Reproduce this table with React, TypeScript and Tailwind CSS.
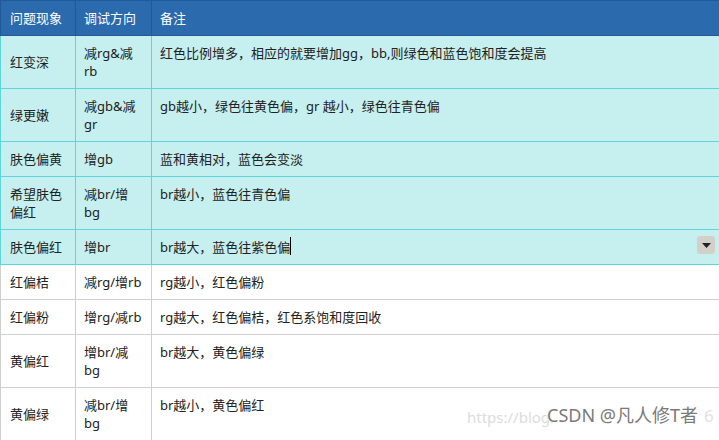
import type { ReactNode } from "react";

type Row = {
  issue: ReactNode;
  dir: ReactNode;
  note: ReactNode;
  hl?: boolean;
  caret?: boolean;
};

const rows: Row[] = [
  { issue: "红变深", dir: <>减rg&amp;减<br />rb</>, note: "红色比例增多，相应的就要增加gg，bb,则绿色和蓝色饱和度会提高", hl: true },
  { issue: "绿更嫩", dir: <>减gb&amp;减<br />gr</>, note: "gb越小，绿色往黄色偏，gr 越小，绿色往青色偏", hl: true },
  { issue: "肤色偏黄", dir: "增gb", note: "蓝和黄相对，蓝色会变淡", hl: true },
  { issue: <>希望肤色<br />偏红</>, dir: <>减br/增<br />bg</>, note: "br越小，蓝色往青色偏", hl: true },
  { issue: "肤色偏红", dir: "增br", note: "br越大，蓝色往紫色偏", hl: true, caret: true },
  { issue: "红偏桔", dir: "减rg/增rb", note: "rg越小，红色偏粉" },
  { issue: "红偏粉", dir: "增rg/减rb", note: "rg越大，红色偏桔，红色系饱和度回收" },
  { issue: "黄偏红", dir: <>增br/减<br />bg</>, note: "br越大，黄色偏绿" },
  { issue: "黄偏绿", dir: <>减br/增<br />bg</>, note: "br越小，黄色偏红" },
];

export default function App() {
  return (
    <div
      className="relative h-[440px] w-[719px] overflow-hidden bg-white text-[13px] leading-[18px] text-[#222]"
      style={{ fontFamily: '"Noto Sans", "Noto Sans CJK SC", sans-serif' }}
    >
      <table className="w-[720px] table-fixed border-collapse">
        <colgroup>
          <col className="w-[75px]" />
          <col className="w-[76px]" />
          <col />
        </colgroup>
        <thead>
          <tr className="h-[35px] bg-[#2a6aad] text-left text-white">
            <th className="border border-[#215a96] px-[9px] font-normal">问题现象</th>
            <th className="border border-[#215a96] px-[8px] font-normal">调试方向</th>
            <th className="border border-[#215a96] px-[8px] font-normal">备注</th>
          </tr>
        </thead>
        <tbody>
          {rows.map((r, i) => {
            const cell = r.hl
              ? "border border-[#5fd5d9] bg-[#c6efef]"
              : "border border-[#cfcfcf] bg-white";
            return (
              <tr key={i}>
                <td className={`${cell} px-[9px] py-2 align-middle`}>{r.issue}</td>
                <td className={`${cell} px-[8px] py-2 align-top`}>{r.dir}</td>
                <td className={`${cell} relative px-[8px] py-2 align-top`}>
                  {r.note}
                  {r.caret && (
                    <>
                      <span className="relative">
                        <span className="absolute left-0 top-[-1px] h-[18px] w-px bg-black" />
                      </span>
                      <span className="absolute right-[4px] top-[6px] flex h-[18px] w-[18px] items-center justify-center rounded-[3px] bg-[#d3d0c9]">
                        <svg width="9" height="5" viewBox="0 0 9 5">
                          <path d="M0 0h9L4.5 5z" fill="#222" />
                        </svg>
                      </span>
                    </>
                  )}
                </td>
              </tr>
            );
          })}
        </tbody>
      </table>
      <span className="absolute left-[467px] top-[406px] text-[15px] leading-[22px] text-[#dcdcdc]">
        https://blog.
      </span>
      <span
        className="absolute left-[547px] top-[404px] text-[18px] leading-[22px] text-[#7a7a7a]"
        style={{ textShadow: "0 0 2px #fff, 0 0 2px #fff" }}
      >
        CSDN @凡人修T者
      </span>
      <span className="absolute left-[704px] top-[405px] text-[17px] leading-[22px] text-[#e2e2e2]">
        6
      </span>
    </div>
  );
}
